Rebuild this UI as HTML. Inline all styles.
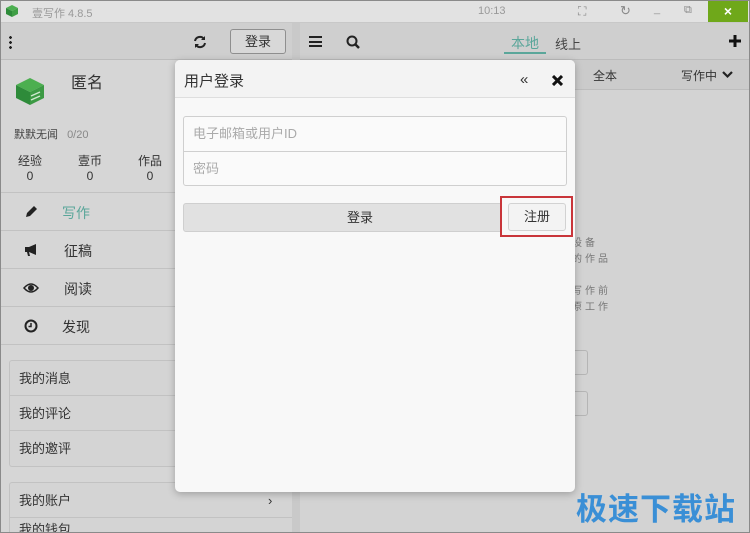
<!DOCTYPE html>
<html style="width:750px;height:533px;overflow:hidden"><head><meta charset="utf-8">
<style>
*{margin:0;padding:0;box-sizing:border-box}
body{width:750px;height:533px;overflow:hidden;background:#d3d3d3;font-family:"Liberation Sans","Noto Sans CJK SC",sans-serif;color:#333;position:relative;font-size:13px}
.abs{position:absolute}
.title{left:0;top:0;width:750px;height:23px;background:#e2e2e2;border-bottom:1px solid #c8c8c8}
.frame{left:0;top:0;width:750px;height:533px;border:1px solid #8a8a8a;pointer-events:none}
.tb{top:23px;height:37px;background:#cfcfcf;border-bottom:1px solid #bcbcbc}
.side{left:0;top:60px;width:292px;height:473px;background:#d6d6d6}
.mi{left:0;width:292px;height:38px;border-bottom:1px solid #c2c2c2;font-size:14px}
.box{left:9px;width:283px;border:1px solid #c2c2c2;border-right:none;border-radius:3px 0 0 3px;background:#d4d4d4}
.bi{height:35px;line-height:35px;padding-left:9px;border-bottom:1px solid #c2c2c2;font-size:13px;position:relative}
.dlg{left:175px;top:60px;width:400px;height:432px;background:#f8f8f8;border-radius:5px;box-shadow:0 2px 8px rgba(0,0,0,.25)}
</style></head><body>
<div class="abs title"></div>
<svg class="abs" style="left:4px;top:3px" width="16" height="16" viewBox="0 0 16 16"><path d="M2 5l6-3 6 3-6 3z" fill="#4caf50"/><path d="M2 5v6l6 3V8z" fill="#2e8b3a"/><path d="M14 5v6l-6 3V8z" fill="#3f9e45"/></svg>
<div class="abs" style="left:32px;top:5px;font-size:11px;color:#999">壹写作 4.8.5</div>
<div class="abs" style="left:478px;top:5px;font-size:11px;color:#999">10:13</div>
<div class="abs" style="left:578px;top:4px;font-size:12px;color:#888">⛶</div>
<div class="abs" style="left:620px;top:3px;font-size:13px;color:#888">↻</div>
<div class="abs" style="left:654px;top:3px;font-size:11px;color:#999">_</div>
<div class="abs" style="left:684px;top:4px;font-size:11px;color:#888">⧉</div>
<div class="abs" style="left:708px;top:1px;width:40px;height:21px;background:#6fa81a;color:#fff;text-align:center;line-height:21px;font-size:14px;font-weight:bold">×</div>

<div class="abs tb" style="left:0;width:292px"></div>
<div class="abs tb" style="left:300px;width:450px"></div>
<div class="abs" style="left:292px;top:23px;width:8px;height:510px;background:#c9c9c9"></div>
<div class="abs" style="left:9px;top:35px;width:3px;height:14px;background:radial-gradient(circle,#222 1.3px,transparent 1.5px) 0 0/3px 5px"></div>
<svg class="abs" style="left:193px;top:35px" width="14" height="14" viewBox="0 0 14 14"><path d="M2 6a5 5 0 0 1 9-2M12 8a5 5 0 0 1-9 2" stroke="#222" stroke-width="2" fill="none"/><path d="M12 1v4H8zM2 13V9h4z" fill="#222"/></svg>
<div class="abs" style="left:230px;top:29px;width:56px;height:25px;border:1px solid #8f8f8f;border-radius:3px;background:#d8d8d8;text-align:center;line-height:23px;font-size:13px">登录</div>
<div class="abs" style="left:309px;top:36px;width:13px;height:11px;border-top:2px solid #222;border-bottom:2px solid #222"><div style="margin-top:2.5px;height:2px;background:#222"></div></div>
<svg class="abs" style="left:346px;top:35px" width="15" height="15"><circle cx="6" cy="6" r="4.5" stroke="#222" stroke-width="2" fill="none"/><path d="M9.5 9.5L13 13" stroke="#222" stroke-width="2.5"/></svg>
<div class="abs" style="left:511px;top:33px;font-size:14px;color:#5aa69a">本地</div>
<div class="abs" style="left:504px;top:52px;width:42px;height:2px;background:#5aa69a"></div>
<div class="abs" style="left:555px;top:34px;font-size:13px;color:#444">线上</div>
<svg class="abs" style="left:729px;top:35px" width="12" height="12"><path d="M6 0v12M0 6h12" stroke="#111" stroke-width="3"/></svg>
<div class="abs" style="left:300px;top:60px;width:450px;height:30px;background:#cbcbcb;border-bottom:1px solid #bdbdbd"></div>
<div class="abs" style="left:593px;top:67px;font-size:12px">全本</div>
<div class="abs" style="left:681px;top:67px;font-size:12px">写作中</div>
<svg class="abs" style="left:722px;top:71px" width="11" height="8"><path d="M1 1l4.5 4.5L10 1" stroke="#222" stroke-width="2.2" fill="none"/></svg>
<div class="abs" style="left:572px;top:236px;font-size:10px;color:#777;letter-spacing:3px;line-height:16px">设备<br>的作品<br><br>写作前<br>原工作</div>
<div class="abs" style="left:560px;top:350px;width:28px;height:25px;border:1px solid #b5b5b5;border-radius:3px"></div>
<div class="abs" style="left:560px;top:391px;width:28px;height:25px;border:1px solid #b5b5b5;border-radius:3px"></div>

<div class="abs side"></div>
<svg class="abs" style="left:14px;top:75px" width="32" height="32" viewBox="0 0 32 32"><path d="M2 10l14-7 14 7-14 7z" fill="#4caf50"/><path d="M2 10v13l14 7V17z" fill="#2e8b3a"/><path d="M30 10v13l-14 7V17z" fill="#3c9a44"/><path d="M17 21l9-4M17 25l9-4" stroke="#cfe9cf" stroke-width="1.5"/></svg>
<div class="abs" style="left:71px;top:69px;font-size:16px;color:#333">匿名</div>
<div class="abs" style="left:14px;top:126px;font-size:11px;color:#444">默默无闻 <span style="color:#888;margin-left:6px">0/20</span></div>
<div class="abs" style="left:18px;top:154px;font-size:12px;text-align:center;line-height:15px">经验<br>0</div>
<div class="abs" style="left:78px;top:154px;font-size:12px;text-align:center;line-height:15px">壹币<br>0</div>
<div class="abs" style="left:138px;top:154px;font-size:12px;text-align:center;line-height:15px">作品<br>0</div>
<div class="abs" style="left:0;top:192px;width:292px;height:1px;background:#c2c2c2"></div>
<div class="abs mi" style="top:193px"><svg class="abs" style="left:24px;top:12px" width="14" height="14"><path d="M2 12l1-4 7-7 3 3-7 7z" fill="#222"/></svg><span class="abs" style="left:62px;top:10px;color:#5aa69a">写作</span></div>
<div class="abs mi" style="top:231px"><svg class="abs" style="left:24px;top:12px" width="15" height="14"><path d="M1 4h4l7-3v11l-7-3H1z" fill="#222"/><path d="M3 9l1 4h2l-1-4z" fill="#222"/></svg><span class="abs" style="left:64px;top:10px">征稿</span></div>
<div class="abs mi" style="top:269px"><svg class="abs" style="left:23px;top:13px" width="16" height="12"><path d="M1 6Q8-2 15 6Q8 14 1 6z" fill="none" stroke="#222" stroke-width="1.5"/><circle cx="8" cy="6" r="3" fill="#222"/></svg><span class="abs" style="left:64px;top:10px">阅读</span></div>
<div class="abs mi" style="top:307px"><svg class="abs" style="left:24px;top:12px" width="14" height="14"><circle cx="7" cy="7" r="5.5" fill="none" stroke="#222" stroke-width="2"/><path d="M7 4v3.5H4.5" stroke="#222" stroke-width="1.5" fill="none"/></svg><span class="abs" style="left:62px;top:10px">发现</span></div>
<div class="abs box" style="top:360px"><div class="bi">我的消息</div><div class="bi">我的评论</div><div class="bi" style="border:none">我的邀评</div></div>
<div class="abs box" style="top:482px;height:60px"><div class="bi">我的账户<span style="position:absolute;left:258px">›</span></div><div class="bi" style="top:-6px">我的钱包</div></div>

<div class="abs dlg">
 <div class="abs" style="left:0;top:0;width:400px;height:38px;background:#f3f3f3;border-bottom:1px solid #dedede;border-radius:5px 5px 0 0"></div>
 <div class="abs" style="left:9px;top:10px;font-size:15px;color:#333">用户登录</div>
 <div class="abs" style="left:345px;top:11px;font-size:15px;color:#333">«</div>
 <svg class="abs" style="left:377px;top:15px" width="11" height="11"><path d="M1 1l9 9M10 1l-9 9" stroke="#111" stroke-width="3"/></svg>
 <div class="abs" style="left:8px;top:56px;width:384px;height:70px;border:1px solid #cfcfcf;border-radius:3px;background:#fafafa">
  <div style="height:35px;line-height:34px;padding-left:9px;border-bottom:1px solid #cfcfcf;color:#aaa;font-size:13px">电子邮箱或用户ID</div>
  <div style="height:34px;line-height:34px;padding-left:9px;color:#aaa;font-size:13px">密码</div>
 </div>
 <div class="abs" style="left:8px;top:143px;width:384px;height:29px;background:#e1e1e1;border:1px solid #cfcfcf;border-radius:3px;text-align:center;line-height:27px;font-size:13px;padding-right:30px">登录</div>
 <div class="abs" style="left:325px;top:136px;width:73px;height:41px;border:2px solid #c9353a;background:#f8f8f8"></div>
 <div class="abs" style="left:333px;top:143px;width:58px;height:28px;border:1px solid #d2d2d2;border-radius:3px;background:#f3f3f3;text-align:center;line-height:26px;font-size:13px">注册</div>
</div>
<div class="abs" style="left:576px;top:484px;font-size:31px;font-weight:bold;color:#3a8fd6;letter-spacing:1px">极速下载站</div>
<div class="abs frame"></div>
</body></html>
